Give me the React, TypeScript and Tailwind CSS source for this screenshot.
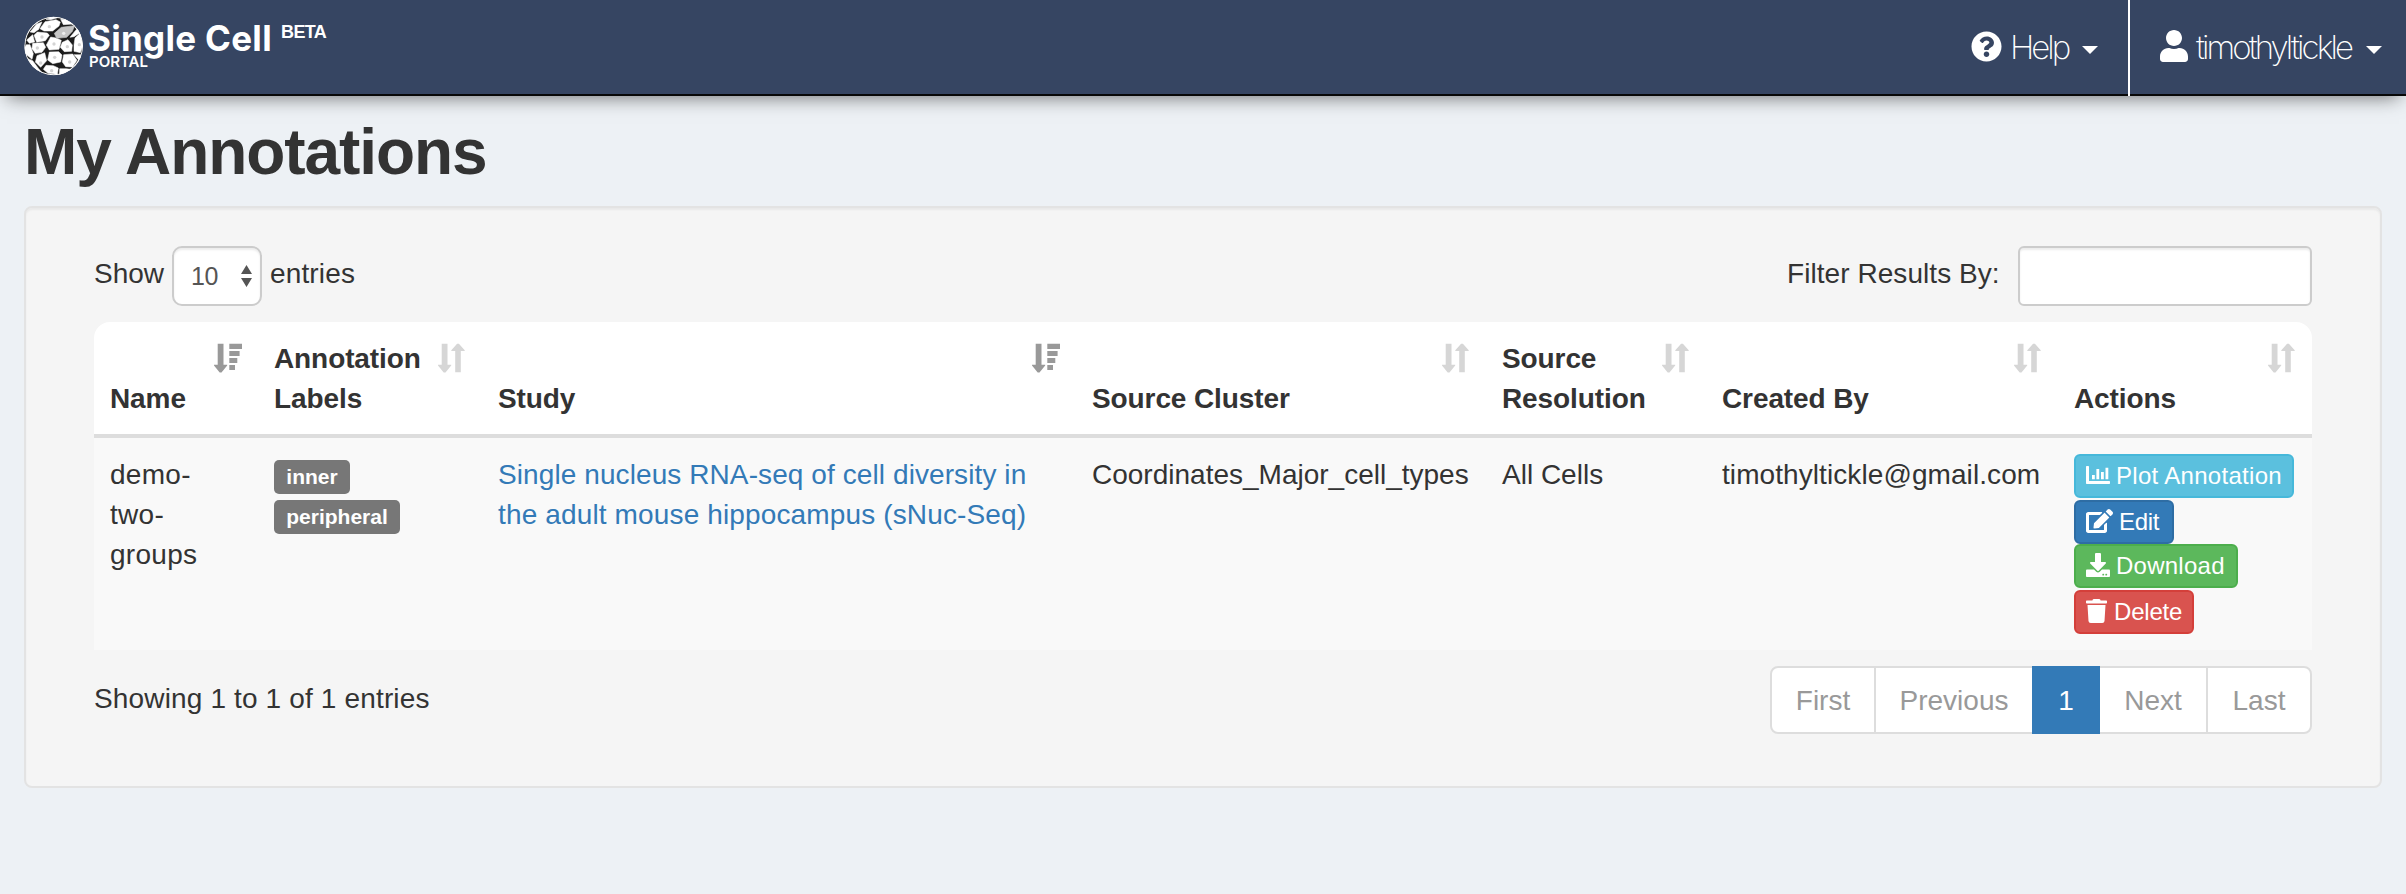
import React from "react";
import { FaQuestionCircle, FaUser, FaEdit, FaDownload, FaTrash } from "react-icons/fa";

const cells = [
  "60,50 75,29 108,23 121,30 117,42 98,57 72,57",
  "42,70 52,60 82,63 88,70 76,86 50,91",
  "38,94 70,92 77,106 66,121 46,124 36,110",
  "92,75 108,78 124,85 117,112 88,114 79,99",
  "144,83 157,99 155,118 133,119 121,106 127,91",
  "165,78 180,64 189,100 181,122 162,118 162,98",
  "88,120 116,119 126,129 122,150 98,155 83,144",
  "51,131 74,122 80,146 62,166 46,150",
  "78,160 100,161 115,168 112,187 84,184 70,172",
  "131,128 158,126 171,145 158,165 137,164 127,150",
  "19,98 30,98 40,125 36,142 17,126 13,108",
  "24,140 38,146 56,170 66,182 44,176",
  "119,170 138,170 154,172 132,186 118,188",
  "162,128 182,128 182,142 174,158 164,162 176,144",
  "20,84 38,68 44,90 28,94",
  "30,60 50,36 66,30 56,52 42,62",
  "78,22 100,14 110,18 92,23",
  "122,22 136,22 160,36 130,38 126,30",
  "166,56 172,50 180,62 162,74 150,76",
];

const nuclei = [
  [88, 44], [66, 75], [52, 108], [102, 96], [142, 104], [178, 98],
  [104, 136], [62, 153], [95, 176], [149, 150],
];

function CellSphere() {
  return (
    <svg className="h-[68px] w-[72px] shrink-0" viewBox="0 0 216 204">
      <clipPath id="sphere">
        <circle cx="101" cy="102" r="88" />
      </clipPath>
      <g clipPath="url(#sphere)">
        <circle cx="101" cy="102" r="88" fill="#1c1c1c" />
        <circle cx="101" cy="102" r="87" fill="none" stroke="#fff" strokeWidth="4" />
        <g fill="#fff" stroke="#fff" strokeWidth="1.5" strokeLinejoin="round">
          {cells.map((points) => (
            <polygon key={points} points={points} />
          ))}
        </g>
        <path d="M103 64 L124 46 L164 41 L157 58 L140 76 L110 79 Z" fill="#c6c6c6" stroke="#c6c6c6" strokeWidth="2" strokeLinejoin="round" />
        <g fill="#d4d4d4">
          {nuclei.map(([x, y]) => (
            <circle key={`${x}-${y}`} cx={x} cy={y} r="5" />
          ))}
        </g>
        <circle cx="131" cy="64" r="5" fill="#eee" />
      </g>
    </svg>
  );
}

function SortIcon({ sorted }: { sorted: boolean }) {
  return (
    <svg
      className={sorted ? "absolute top-[21px] right-[15px] h-[30px] w-[30px] text-[#999]" : "absolute top-[21px] right-[15px] h-[30px] w-[30px] text-[#d6d6d6]"}
      viewBox="0 0 30 30"
      fill="currentColor"
    >
      <path d="M4.7 0.7h5.8v21h3.7v0.8l-5.7 7h-1.8l-5.7-7v-0.8h3.7z" />
      {sorted ? (
        <path d="M16.3 0.7h12.7v5.3h-12.7zM16.3 8h10.3v5h-10.3zM16.3 15h8v5h-8zM16.3 22h5.7v5h-5.7z" />
      ) : (
        <path d="M18.2 29.3v-21.3h-3.9v-0.8l5.8-6.5h1.8l5.8 6.5v0.8h-3.9v21.3z" />
      )}
    </svg>
  );
}

function ChartIcon() {
  return (
    <svg className="h-[18px] w-[24px]" viewBox="0 0 24 18" fill="currentColor">
      <path d="M0 0.7q0-.7.7-.7h1.6q.7 0 .7.7v14.3h20.3q.7 0 .7.7v1.6q0 .7-.7.7h-22.6q-.7 0-.7-.7z" />
      <path d="M6 9h2.8v4.3h-2.8zM10.4 3h2.8v10.3h-2.8zM15 6h2.8v7.3h-2.8zM19.5 1.7h2.8v11.6h-2.8z" />
    </svg>
  );
}

function Caret() {
  return (
    <svg className="h-2 w-4" viewBox="0 0 16 8" fill="currentColor">
      <path d="M0 0h16l-8 8z" />
    </svg>
  );
}

const columns = [
  { title: "Name", sorted: true, width: "w-[164px]" },
  { title: "Annotation Labels", sorted: false, width: "w-[224px]" },
  { title: "Study", sorted: true, width: "w-[594px]" },
  { title: "Source Cluster", sorted: false, width: "w-[410px]" },
  { title: "Source Resolution", sorted: false, width: "w-[220px]" },
  { title: "Created By", sorted: false, width: "w-[352px]" },
  { title: "Actions", sorted: false, width: "w-[254px]" },
];

const button = "flex h-[44px] items-center rounded-[6px] border-2 pl-[10px] text-[24px] leading-[36px] text-white";
const textCell = "px-[16px] pt-[17px] pb-[15px]";

export default function App() {
  return (
    <div className="h-[894px] w-[2406px] overflow-hidden bg-[#edf1f5] font-['Liberation_Sans',sans-serif] text-[28px] leading-[40px] text-[#333]">
      <nav className="flex h-[96px] items-stretch justify-between border-b-2 border-[#080808] bg-[#364562] text-white shadow-[0_8px_18px_-7px_rgba(0,0,0,0.55)]">
        <div className="flex items-start pl-[20px]">
          <div className="pt-[12px]">
            <CellSphere />
          </div>
          <div className="-ml-[4px] w-[193px] pt-[21px] font-['Inter',sans-serif]">
            <div className="text-[35px] leading-[35px] font-bold tracking-[0.3px] whitespace-nowrap">Single Cell</div>
            <div className="-mt-[2px] pl-[1px] text-[15px] leading-[15px] font-semibold">PORTAL</div>
          </div>
          <div className="pt-[22px] text-[18px] leading-[20px] font-bold tracking-[-0.6px]">BETA</div>
        </div>
        <div className="flex font-['Inter',sans-serif] text-[33px] font-extralight">
          <div className="flex w-[157px] items-center">
            <FaQuestionCircle className="-mt-[2px] h-[31px] w-[31px]" />
            <span className="ml-[8px] w-[60px] tracking-[-3px]">Help</span>
            <span className="ml-[12px] mt-[6px] flex"><Caret /></span>
          </div>
          <div className="-mb-[2px] flex w-[278px] items-center border-l-2 border-white pb-[2px] pl-[30px]">
            <FaUser className="-mt-[2px] h-[32px] w-[28px]" />
            <span className="ml-[8px] w-[158px] tracking-[-2.9px]">timothyltickle</span>
            <span className="ml-[12px] mt-[6px] flex"><Caret /></span>
          </div>
        </div>
      </nav>

      <main className="px-[24px]">
        <h1 className="pt-[21px] text-[64px] leading-[70px] font-bold tracking-[-1.08px]">My Annotations</h1>

        <section className="mt-[19px] h-[582px] rounded-[8px] border-2 border-[#e3e3e3] bg-[#f5f5f5] px-[68px] pt-[38px] shadow-[inset_0_2px_2px_rgba(0,0,0,0.05)]">
          <div className="flex h-[60px] items-start justify-between">
            <div className="flex">
              <span className="w-[78px] pt-[8px]">Show</span>
              <div className="flex h-[60px] w-[90px] items-center justify-between rounded-[10px] border-2 border-[#ccc] bg-white pr-[8px] pl-[17px] text-[#555] shadow-[inset_0_2px_2px_rgba(0,0,0,0.075)]">
                <span className="text-[25px] tracking-[-0.5px]">10</span>
                <svg className="h-[22px] w-[11px]" viewBox="0 0 11 22" fill="currentColor">
                  <path d="M0 9 5.5 0 11 9zM0 13h11l-5.5 9z" />
                </svg>
              </div>
              <span className="pt-[8px] pl-[8px] tracking-[0.15px]">entries</span>
            </div>
            <div className="flex">
              <span className="w-[231px] pt-[8px] tracking-[0.06px]">Filter Results By:</span>
              <div className="h-[60px] w-[294px] rounded-[6px] border-2 border-[#ccc] bg-white shadow-[inset_0_2px_2px_rgba(0,0,0,0.075)]" />
            </div>
          </div>

          <table className="mt-[16px] w-[2218px] table-fixed border-separate border-spacing-0">
            <thead>
              <tr>
                {columns.map((c) => (
                  <th key={c.title} className={`${c.width} relative h-[116px] border-b-4 border-[#ddd] bg-white pt-[17px] pr-[60px] pb-[15px] pl-[16px] text-left align-bottom font-bold tracking-[-0.1px] first:rounded-tl-[16px] last:rounded-tr-[16px]`}>
                    <SortIcon sorted={c.sorted} />
                    {c.title}
                  </th>
                ))}
              </tr>
            </thead>
            <tbody>
              <tr className="bg-[#f9f9f9] align-top">
                <td className={`${textCell} h-[212px] tracking-[0.3px]`}>
                  demo-<br />two-<br />groups
                </td>
                <td className="p-[16px]">
                  <div className="flex flex-col items-start gap-[6px] pt-[6px] text-[21px] leading-[33px] font-bold text-white">
                    <span className="h-[34px] w-[76px] rounded-[5px] bg-[#777] text-center">inner</span>
                    <span className="h-[34px] w-[126px] rounded-[5px] bg-[#777] text-center">peripheral</span>
                  </div>
                </td>
                <td className={`${textCell} whitespace-nowrap text-[#337ab7]`}>
                  <span className="block tracking-[0.09px]">Single nucleus RNA-seq of cell diversity in</span>
                  <span className="block tracking-[0.14px]">the adult mouse hippocampus (sNuc-Seq)</span>
                </td>
                <td className={textCell}>Coordinates_Major_cell_types</td>
                <td className={textCell}>All Cells</td>
                <td className={`${textCell} tracking-[0.08px]`}>timothyltickle@gmail.com</td>
                <td className="p-[16px]">
                  <div className="flex flex-col items-start">
                    <div className={`${button} w-[220px] border-[#46b8da] bg-[#5bc0de] tracking-[0.3px] whitespace-nowrap`}>
                      <span className="-mt-[2px]"><ChartIcon /></span>
                      <span className="ml-[6px]">Plot Annotation</span>
                    </div>
                    <div className={`${button} mt-[2px] w-[100px] border-[#2e6da4] bg-[#337ab7]`}>
                      <FaEdit className="-mt-[2px] h-[24px] w-[27px]" />
                      <span className="ml-[6px] tracking-[-0.3px]">Edit</span>
                    </div>
                    <div className={`${button} w-[164px] border-[#4cae4c] bg-[#5cb85c] tracking-[0.25px]`}>
                      <FaDownload className="-mt-[2px] h-[24px] w-[24px]" />
                      <span className="ml-[6px]">Download</span>
                    </div>
                    <div className={`${button} mt-[2px] w-[120px] border-[#d43f3a] bg-[#d9534f]`}>
                      <FaTrash className="-mt-[2px] h-[24px] w-[21px]" />
                      <span className="ml-[7px] tracking-[-0.2px]">Delete</span>
                    </div>
                  </div>
                </td>
              </tr>
            </tbody>
          </table>

          <div className="flex items-start justify-between pt-[16px]">
            <span className="pt-[13px] tracking-[0.15px]">Showing 1 to 1 of 1 entries</span>
            <div className="flex h-[68px] text-center leading-[66px] text-[#999]">
              <span className="w-[106px] rounded-l-[8px] border-2 border-[#ddd] bg-white">First</span>
              <span className="w-[156px] border-y-2 border-[#ddd] bg-white">Previous</span>
              <span className="w-[68px] border-2 border-[#337ab7] bg-[#337ab7] text-white">1</span>
              <span className="w-[106px] border-y-2 border-[#ddd] bg-white">Next</span>
              <span className="w-[106px] rounded-r-[8px] border-2 border-[#ddd] bg-white">Last</span>
            </div>
          </div>
        </section>
      </main>
    </div>
  );
}
